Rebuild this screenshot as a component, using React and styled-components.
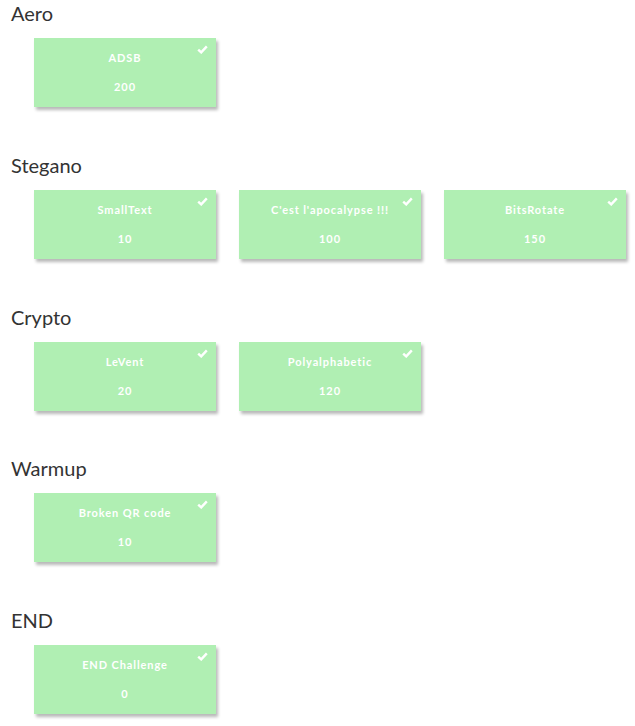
import React from "react";
import styled, { createGlobalStyle } from "styled-components";

const Global = createGlobalStyle`
  html, body { margin: 0; padding: 0; background: #fff; }
  body { font-family: Lato, "Open Sans", sans-serif; }
`;

const Page = styled.div`
  padding-top: 1px;
`;

const Section = styled.section`
  margin-bottom: 45.75px;
`;

const Heading = styled.h3`
  margin: 0 0 13px 11px;
  font-family: Lato, sans-serif;
  font-weight: 400;
  font-size: 20px;
  line-height: 24px;
  color: #333;
`;

const CardRow = styled.div`
  display: flex;
  gap: 23px;
  padding-left: 34px;
`;

const Card = styled.div`
  position: relative;
  width: 182px;
  height: 69px;
  box-sizing: border-box;
  background: #b0efb3;
  box-shadow: 2px 3px 3px rgba(0, 0, 0, 0.28);
  display: flex;
  flex-direction: column;
  align-items: center;
  padding-top: 13px;
  gap: 15px;
  color: #fff;
  font-family: Lato, sans-serif;
  font-weight: 700;
  font-size: 11px;
  line-height: 14px;
  letter-spacing: 0.9px;
`;

const Check = styled.svg`
  position: absolute;
  top: 7px;
  right: 8px;
  width: 11px;
  height: 9px;
`;

const data = [
  { name: "Aero", items: [["ADSB", 200]] },
  {
    name: "Stegano",
    items: [["SmallText", 10], ["C'est l'apocalypse !!!", 100], ["BitsRotate", 150]],
  },
  { name: "Crypto", items: [["LeVent", 20], ["Polyalphabetic", 120]] },
  { name: "Warmup", items: [["Broken QR code", 10]] },
  { name: "END", items: [["END Challenge", 0]] },
];

export default function App() {
  return (
    <Page>
      <Global />
      {data.map((s) => (
        <Section key={s.name}>
          <Heading>{s.name}</Heading>
          <CardRow>
            {s.items.map(([t, p]) => (
              <Card key={t}>
                <Check viewBox="0 0 11 9">
                  <path d="M1.2 4.6 L4.2 7.4 L9.8 1.4" fill="none" stroke="#fff" strokeWidth="2.4" />
                </Check>
                <div>{t}</div>
                <div>{p}</div>
              </Card>
            ))}
          </CardRow>
        </Section>
      ))}
    </Page>
  );
}
